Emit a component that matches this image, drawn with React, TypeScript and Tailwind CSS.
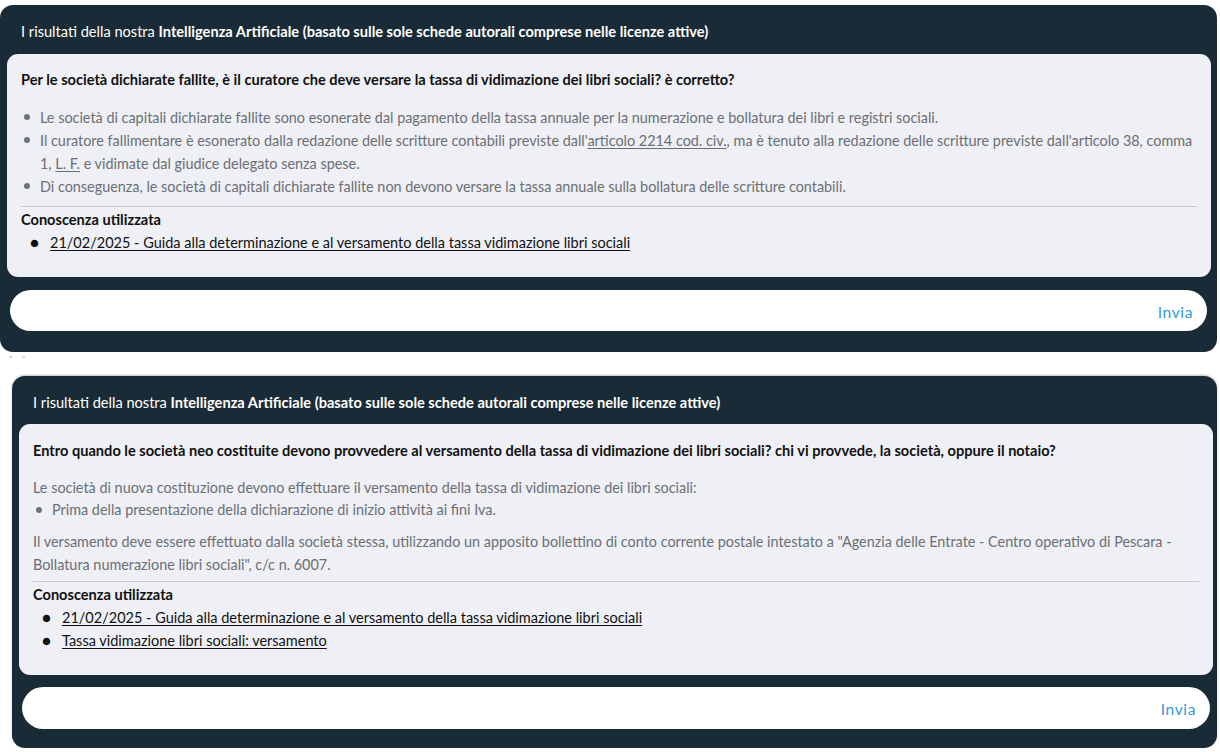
import React from "react";

const font = { fontFamily: "Lato, 'Liberation Sans', sans-serif" };

type Link = { label: string };

const InputBar = ({ className }: { className: string }) => (
  <div className={`flex items-center justify-end bg-white rounded-full pr-[14px] pt-[4px] ${className}`}>
    <span className="text-[15.5px] tracking-[0.04em] text-[#2e9ad8]">Invia</span>
  </div>
);

const Sources = ({ links, lineGap }: { links: Link[]; lineGap: string }) => (
  <div className={`border-t border-[#c9ccd1] pt-[3px] ${lineGap}`}>
    <h4 className="font-bold text-[14.6px] leading-[20px] text-[#111]">Conoscenza utilizzata</h4>
    <ul className="mt-[2px] space-y-[2px]">
      {links.map((l) => (
        <li key={l.label} className="flex items-start text-[14.5px] leading-[21px]">
          <span className="w-[29px] pl-[9px] text-[#111] text-[15px]">●</span>
          <a className="underline underline-offset-2 text-[#111]">{l.label}</a>
        </li>
      ))}
    </ul>
  </div>
);

const Header = ({ h }: { h: string }) => (
  <div className={`flex items-center pl-[14px] text-white text-[14.6px] ${h}`}>
    <span>
      I risultati della nostra{" "}
      <b className="font-bold">Intelligenza Artificiale (basato sulle sole schede autorali comprese nelle licenze attive)</b>
    </span>
  </div>
);

const Dot = () => (
  <span className="shrink-0 w-[19px] pl-[3px] pt-[8px]">
    <span className="block w-[6px] h-[6px] rounded-full bg-[#6e7379]" />
  </span>
);

export default function App() {
  return (
    <div className="bg-white min-h-[752px] pt-[5px]" style={font}>
      {/* first answer */}
      <section className="w-[1217px] bg-[#192b36] rounded-[13px] px-[7px] pb-[21px]">
        <Header h="h-[49px] pt-[5px]" />
        <div className="w-[1204px] bg-[#eef0f5] rounded-[11px] px-[14px] pt-[16px] pb-[24px]">
          <p className="font-bold text-[14.6px] leading-[20px] text-[#111]">
            Per le società dichiarate fallite, è il curatore che deve versare la tassa di vidimazione dei libri sociali? è corretto?
          </p>
          <ul className="mt-[16px] text-[14.4px] leading-[23px] text-[#6b6f74]">
            <li className="flex">
              <Dot />
              <span>Le società di capitali dichiarate fallite sono esonerate dal pagamento della tassa annuale per la numerazione e bollatura dei libri e registri sociali.</span>
            </li>
            <li className="flex">
              <Dot />
              <span>
                Il curatore fallimentare è esonerato dalla redazione delle scritture contabili previste dall'
                <a className="underline underline-offset-2">articolo 2214 cod. civ.</a>, ma è tenuto alla redazione delle scritture previste dall'articolo 38, comma 1,{" "}
                <a className="underline underline-offset-2">L. F.</a> e vidimate dal giudice delegato senza spese.
              </span>
            </li>
            <li className="flex">
              <Dot />
              <span>Di conseguenza, le società di capitali dichiarate fallite non devono versare la tassa annuale sulla bollatura delle scritture contabili.</span>
            </li>
          </ul>
          <Sources
            lineGap="mt-[8px]"
            links={[{ label: "21/02/2025 - Guida alla determinazione e al versamento della tassa vidimazione libri sociali" }]}
          />
        </div>
        <InputBar className="h-[41px] mt-[13px] mx-[3px]" />
      </section>

      <div className="h-[24px] pt-[4px] pl-[9px] flex gap-[10px]">
        <span className="block w-[3px] h-[2px] bg-[#d5dbe3]" />
        <span className="block w-[3px] h-[2px] bg-[#d5dbe3]" />
      </div>

      {/* second answer */}
      <section className="ml-[12px] w-[1205px] bg-[#192b36] rounded-[13px] pl-[7px] pr-[4px] pb-[19px] shadow-[0_-1px_2px_rgba(0,0,0,0.25)]">
        <Header h="h-[48px] pt-[6px]" />
        <div className="bg-[#eef0f5] rounded-[11px] px-[14px] pt-[17px] pb-[24px]">
          <p className="font-bold text-[14.6px] leading-[20px] text-[#111]">
            Entro quando le società neo costituite devono provvedere al versamento della tassa di vidimazione dei libri sociali? chi vi provvede, la società, oppure il notaio?
          </p>
          <div className="mt-[16px] text-[14.4px] leading-[22px] text-[#6b6f74]">
            <p>Le società di nuova costituzione devono effettuare il versamento della tassa di vidimazione dei libri sociali:</p>
            <ul>
              <li className="flex">
                <Dot />
                <span>Prima della presentazione della dichiarazione di inizio attività ai fini Iva.</span>
              </li>
            </ul>
            <p className="mt-[9px] leading-[23px]">
              Il versamento deve essere effettuato dalla società stessa, utilizzando un apposito bollettino di conto corrente postale intestato a "Agenzia delle Entrate - Centro operativo di Pescara - Bollatura numerazione libri sociali", c/c n. 6007.
            </p>
          </div>
          <Sources
            lineGap="mt-[5px]"
            links={[
              { label: "21/02/2025 - Guida alla determinazione e al versamento della tassa vidimazione libri sociali" },
              { label: "Tassa vidimazione libri sociali: versamento" },
            ]}
          />
        </div>
        <InputBar className="h-[42px] mt-[12px] mx-[3px]" />
      </section>
    </div>
  );
}
